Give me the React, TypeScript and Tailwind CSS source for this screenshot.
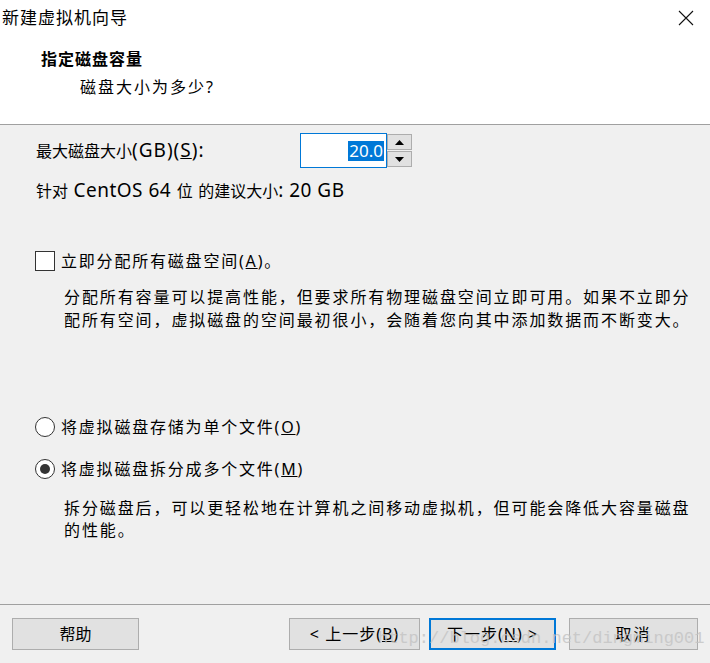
import React from 'react';

const font = { fontFamily: '"Noto Sans", "Noto Sans CJK SC", sans-serif' };

function Btn({ children, primary, className }: { children: React.ReactNode; primary?: boolean; className?: string }) {
    return (
        <div
            className={
                'h-[32px] flex items-center justify-center bg-[#e1e1e1] text-[16px] text-black ' +
                (primary ? 'border-2 border-[#0078d7] ' : 'border border-[#adadad] ') +
                (className ?? '')
            }
        >
            {children}
        </div>
    );
}

// latin runs in the upper section render larger, like YaHei does
function L({ children, t = 'tracking-[1px]' }: { children: React.ReactNode; t?: string }) {
    return <span className={'text-[19px] leading-[24px] ' + t}>{children}</span>;
}

export default function App() {
    return (
        <div className="relative w-[710px] h-[663px] flex flex-col bg-[#f0f0f0] text-black overflow-hidden" style={font}>
            {/* header */}
            <div className="h-[125px] bg-white border-b border-[#a0a0a0] flex flex-col">
                <div className="flex items-start justify-between pt-[6px] pl-[2px] pr-[16px]">
                    <span className="text-[17px] leading-[24px] tracking-[1px]">新建虚拟机向导</span>
                    <svg width="16" height="16" viewBox="0 0 16 16" className="mt-[4px]">
                        <path d="M1 1 L15 15 M15 1 L1 15" stroke="#111" strokeWidth="1.1" fill="none" />
                    </svg>
                </div>
                <div className="mt-[17px] pl-[41px] text-[16px] leading-[24px] font-bold tracking-[1px]">指定磁盘容量</div>
                <div className="mt-[4px] pl-[80px] text-[16px] leading-[24px] tracking-[2px]">磁盘大小为多少?</div>
            </div>

            {/* body */}
            <div className="flex-1 flex flex-col pl-[36px]">
                <div className="mt-[8px] flex items-center">
                    <span className="w-[264px] text-[16px] leading-[24px]">
                        最大磁盘大小<L>(GB)(<u>S</u>):</L>
                    </span>
                    <div className="flex h-[35px]">
                        <div className="w-[87px] h-[35px] bg-white border border-[#0078d7] flex items-center justify-end pr-[2px]">
                            <span className="bg-[#0078d7] text-white text-[17px] leading-[20px] px-[1px]">20.0</span>
                        </div>
                        <div className="flex flex-col w-[25px] pt-[1px] gap-[1px]">
                            <div className="h-[16px] bg-[#e1e1e1] border border-[#adadad] flex items-center justify-center">
                                <svg width="9" height="5" viewBox="0 0 9 5"><path d="M0 5 L4.5 0 L9 5 Z" fill="#000" /></svg>
                            </div>
                            <div className="h-[16px] bg-[#e1e1e1] border border-[#adadad] flex items-center justify-center">
                                <svg width="9" height="5" viewBox="0 0 9 5"><path d="M0 0 L4.5 5 L9 0 Z" fill="#000" /></svg>
                            </div>
                        </div>
                    </div>
                </div>

                <div className="mt-[10px] text-[16px] leading-[24px]">
                    针对<L t="tracking-[0.5px]"> CentOS 64 </L>位<L t="tracking-[0.5px]"> </L>的建议大小<L t="tracking-[0.5px]">: 20 GB</L>
                </div>

                <div className="mt-[48px] flex items-center gap-[6px] -ml-[1px]">
                    <div className="w-[20px] h-[20px] bg-white border border-[#333]" />
                    <span className="text-[16px] leading-[20px] tracking-[1.8px]">
                        立即分配所有磁盘空间(<u>A</u>)。
                    </span>
                </div>

                <div className="mt-[15px] pl-[28px] text-[16px] leading-[23px] tracking-[1.9px]">
                    <div>分配所有容量可以提高性能，但要求所有物理磁盘空间立即可用。如果不立即分</div>
                    <div>配所有空间，虚拟磁盘的空间最初很小，会随着您向其中添加数据而不断变大。</div>
                </div>

                <div className="mt-[85px] flex items-center gap-[6px] -ml-[1px]">
                    <div className="w-[20px] h-[20px] rounded-full bg-white border border-[#333]" />
                    <span className="text-[16px] leading-[20px] tracking-[1.8px]">
                        将虚拟磁盘存储为单个文件(<u>O</u>)
                    </span>
                </div>

                <div className="mt-[22px] flex items-center gap-[6px] -ml-[1px]">
                    <div className="w-[20px] h-[20px] rounded-full bg-white border border-[#333] flex items-center justify-center">
                        <div className="w-[10px] h-[10px] rounded-full bg-[#333]" />
                    </div>
                    <span className="text-[16px] leading-[20px] tracking-[1.8px]">
                        将虚拟磁盘拆分成多个文件(<u>M</u>)
                    </span>
                </div>

                <div className="mt-[18px] pl-[28px] text-[16px] leading-[22px] tracking-[1.9px]">
                    <div>拆分磁盘后，可以更轻松地在计算机之间移动虚拟机，但可能会降低大容量磁盘</div>
                    <div>的性能。</div>
                </div>
            </div>

            {/* footer */}
            <div className="h-[59px] border-t border-[#a0a0a0] flex items-start pt-[13px] px-[12px]">
                <Btn className="w-[127px]">帮助</Btn>
                <div className="flex-1" />
                <Btn className="w-[131px] tracking-[1px]">
                    &lt; 上一步(<u>B</u>)
                </Btn>
                <Btn primary className="w-[127px] ml-[9px] tracking-[1px]">
                    下一步(<u>N</u>) &gt;
                </Btn>
                <Btn className="w-[129px] ml-[13px] tracking-[2px]">取消</Btn>
            </div>

            {/* watermark */}
            <div
                className="absolute left-[378px] top-[627px] text-[17px] leading-[24px] text-[#c4c4c4] opacity-80 pointer-events-none"
                style={{ fontFamily: '"Liberation Mono", monospace' }}
            >
                http://blog.csdn.net/dingming001
            </div>
        </div>
    );
}
